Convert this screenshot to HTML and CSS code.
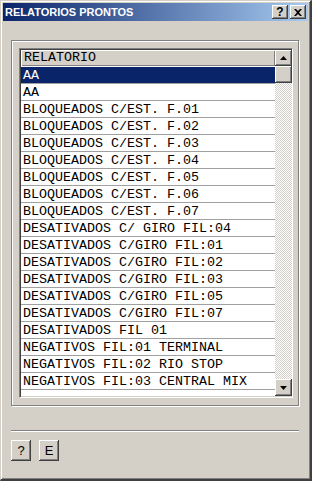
FILE: index.html
```html
<!DOCTYPE html>
<html>
  <head>
    <title>Relatorios Prontos</title>
    <link rel="stylesheet" href="styles.css">
  </head>
  <body>
    <div class="window">
      <div class="title-bar">
        <span class="title-text">RELATORIOS PRONTOS</span>
        <div class="caption-buttons">
          <button class="caption-button">?</button>
          <button class="caption-button">
            <svg viewBox="0 0 8 7" width="8" height="7">
              <path d="M0 0h2l2 2 2-2h2L5 3.5 8 7H6L4 5 2 7H0l3-3.5z" />
            </svg>
          </button>
        </div>
      </div>

      <div class="content">
        <div class="group-box">
          <div class="list-box">
            <div class="list-rows">
              <div class="list-header">RELATORIO</div>
              <div class="list-row selected">AA</div>
              <div class="list-row">AA</div>
              <div class="list-row">BLOQUEADOS C/EST. F.01</div>
              <div class="list-row">BLOQUEADOS C/EST. F.02</div>
              <div class="list-row">BLOQUEADOS C/EST. F.03</div>
              <div class="list-row">BLOQUEADOS C/EST. F.04</div>
              <div class="list-row">BLOQUEADOS C/EST. F.05</div>
              <div class="list-row">BLOQUEADOS C/EST. F.06</div>
              <div class="list-row">BLOQUEADOS C/EST. F.07</div>
              <div class="list-row">DESATIVADOS C/ GIRO FIL:04</div>
              <div class="list-row">DESATIVADOS C/GIRO FIL:01</div>
              <div class="list-row">DESATIVADOS C/GIRO FIL:02</div>
              <div class="list-row">DESATIVADOS C/GIRO FIL:03</div>
              <div class="list-row">DESATIVADOS C/GIRO FIL:05</div>
              <div class="list-row">DESATIVADOS C/GIRO FIL:07</div>
              <div class="list-row">DESATIVADOS FIL 01</div>
              <div class="list-row">NEGATIVOS FIL:01 TERMINAL</div>
              <div class="list-row">NEGATIVOS FIL:02 RIO STOP</div>
              <div class="list-row">NEGATIVOS FIL:03 CENTRAL MIX</div>
              <div class="list-row"></div>
            </div>
            <div class="scrollbar">
              <div class="scroll-button">
                <svg viewBox="0 0 7 4" width="7" height="4">
                  <path d="M3.5 0L7 4H0z" />
                </svg>
              </div>
              <div class="scroll-thumb"></div>
              <div class="scroll-track"></div>
              <div class="scroll-button">
                <svg viewBox="0 0 7 4" width="7" height="4">
                  <path d="M0 0h7L3.5 4z" />
                </svg>
              </div>
            </div>
          </div>
        </div>

        <div class="separator"></div>

        <div class="button-row">
          <button class="push-button">?</button>
          <button class="push-button">E</button>
        </div>
      </div>
    </div>
  </body>
</html>
```

FILE: styles.css
```css
body {
  margin: 0;
  background-color: #d4d0c8;
  font-family: "Liberation Sans", Arial, sans-serif;
}
.window {
  width: 312px;
  height: 481px;
  box-sizing: border-box;
  padding: 2px 2px 2px 2px;
  background-color: #d4d0c8;
  border-top: 1px solid #d4d0c8;
  border-left: 1px solid #d4d0c8;
  border-right: 2px solid #404040;
  border-bottom: 2px solid #404040;
  box-shadow: inset 1px 1px 0 #ffffff, inset -1px -1px 0 #808080;
  display: flex;
  flex-direction: column;
}
.title-bar {
  height: 18px;
  flex-shrink: 0;
  display: flex;
  align-items: center;
  justify-content: space-between;
  padding: 0 2px 0 2px;
  background: linear-gradient(to right, #0a246a, #a6caf0);
}
.title-text {
  color: #ffffff;
  font-weight: bold;
  font-size: 11px;
}
.caption-buttons {
  display: flex;
  gap: 2px;
}
.caption-button {
  width: 16px;
  height: 14px;
  padding: 0;
  margin: 0;
  box-sizing: border-box;
  background-color: #d4d0c8;
  border: none;
  box-shadow: inset -1px -1px 0 #404040, inset 1px 1px 0 #ffffff,
    inset -2px -2px 0 #808080;
  display: flex;
  align-items: center;
  justify-content: center;
  font-family: "Liberation Sans", Arial, sans-serif;
  font-weight: bold;
  font-size: 12px;
  color: #000000;
  line-height: 1;
}
.caption-button svg {
  fill: #000000;
}
.content {
  flex: 1;
  display: flex;
  flex-direction: column;
  padding: 19px 9px 0 8px;
}
.group-box {
  height: 366px;
  box-sizing: border-box;
  padding: 7px 5px 6px 7px;
  border: 1px solid #808080;
  box-shadow: inset 1px 1px 0 #ffffff, 1px 1px 0 #ffffff;
}
.list-box {
  height: 350px;
  box-sizing: border-box;
  display: flex;
  border-top: 1px solid #808080;
  border-left: 1px solid #808080;
  border-right: 1px solid #ffffff;
  border-bottom: 1px solid #ffffff;
  box-shadow: inset 1px 1px 0 #404040, inset -1px -1px 0 #d4d0c8;
  padding: 1px;
  background-color: #ffffff;
}
.list-rows {
  flex: 1;
  overflow: hidden;
  font-family: "Liberation Mono", "Courier New", monospace;
  font-size: 13.33px;
  color: #000000;
}
.list-header {
  height: 16px;
  line-height: 16px;
  box-sizing: border-box;
  padding-left: 3px;
  background-color: #d4d0c8;
  box-shadow: inset 1px 1px 0 #ffffff, inset -1px -1px 0 #808080;
}
.list-row {
  height: 17px;
  line-height: 17px;
  box-sizing: border-box;
  padding-left: 2px;
  border-bottom: 1px solid #a0a0a0;
  white-space: nowrap;
}
.list-row.selected {
  background-color: #0a246a;
  color: #ffffff;
  margin-top: 1px;
}
.scrollbar {
  width: 17px;
  flex-shrink: 0;
  display: flex;
  flex-direction: column;
  margin-right: -1px;
}
.scroll-button {
  height: 17px;
  flex-shrink: 0;
  box-sizing: border-box;
  background-color: #d4d0c8;
  box-shadow: inset -1px -1px 0 #404040, inset 1px 1px 0 #ffffff,
    inset -2px -2px 0 #808080;
  display: flex;
  align-items: center;
  justify-content: center;
}
.scroll-button:first-child {
  height: 16px;
}
.scroll-button svg {
  fill: #000000;
}
.scroll-thumb {
  height: 17px;
  flex-shrink: 0;
  background-color: #d4d0c8;
  box-shadow: inset -1px -1px 0 #404040, inset 1px 1px 0 #ffffff,
    inset -2px -2px 0 #808080;
}
.scroll-track {
  flex: 1;
  background: repeating-conic-gradient(#ffffff 0 25%, #d4d0c8 0 50%) 0 0 / 2px
    2px;
}
.separator {
  margin-top: 24px;
  border-top: 1px solid #808080;
  border-bottom: 1px solid #ffffff;
  height: 0;
}
.button-row {
  display: flex;
  gap: 8px;
  margin-top: 8px;
}
.push-button {
  width: 20px;
  height: 21px;
  padding: 0;
  margin: 0;
  box-sizing: border-box;
  background-color: #d4d0c8;
  border: none;
  box-shadow: inset -1px -1px 0 #404040, inset 1px 1px 0 #ffffff,
    inset -2px -2px 0 #808080;
  font-family: "Liberation Sans", Arial, sans-serif;
  font-size: 13px;
  color: #000000;
}
```
